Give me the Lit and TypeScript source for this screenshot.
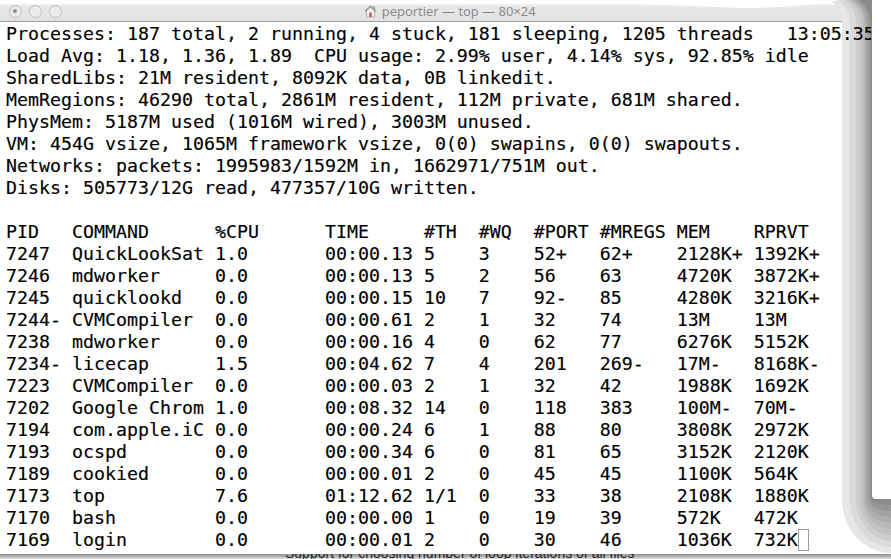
import { LitElement, html, css, svg } from "lit";
import { customElement } from "lit/decorators.js";

const SUMMARY = [
  "Processes: 187 total, 2 running, 4 stuck, 181 sleeping, 1205 threads   13:05:35",
  "Load Avg: 1.18, 1.36, 1.89  CPU usage: 2.99% user, 4.14% sys, 92.85% idle",
  "SharedLibs: 21M resident, 8092K data, 0B linkedit.",
  "MemRegions: 46290 total, 2861M resident, 112M private, 681M shared.",
  "PhysMem: 5187M used (1016M wired), 3003M unused.",
  "VM: 454G vsize, 1065M framework vsize, 0(0) swapins, 0(0) swapouts.",
  "Networks: packets: 1995983/1592M in, 1662971/751M out.",
  "Disks: 505773/12G read, 477357/10G written.",
  " ",
];

const WIDTHS = [6, 13, 10, 9, 5, 5, 6, 7, 7, 0];
const TABLE = [
  ["PID", "COMMAND", "%CPU", "TIME", "#TH", "#WQ", "#PORT", "#MREGS", "MEM", "RPRVT"],
  ["7247", "QuickLookSat", "1.0", "00:00.13", "5", "3", "52+", "62+", "2128K+", "1392K+"],
  ["7246", "mdworker", "0.0", "00:00.13", "5", "2", "56", "63", "4720K", "3872K+"],
  ["7245", "quicklookd", "0.0", "00:00.15", "10", "7", "92-", "85", "4280K", "3216K+"],
  ["7244-", "CVMCompiler", "0.0", "00:00.61", "2", "1", "32", "74", "13M", "13M"],
  ["7238", "mdworker", "0.0", "00:00.16", "4", "0", "62", "77", "6276K", "5152K"],
  ["7234-", "licecap", "1.5", "00:04.62", "7", "4", "201", "269-", "17M-", "8168K-"],
  ["7223", "CVMCompiler", "0.0", "00:00.03", "2", "1", "32", "42", "1988K", "1692K"],
  ["7202", "Google Chrom", "1.0", "00:08.32", "14", "0", "118", "383", "100M-", "70M-"],
  ["7194", "com.apple.iC", "0.0", "00:00.24", "6", "1", "88", "80", "3808K", "2972K"],
  ["7193", "ocspd", "0.0", "00:00.34", "6", "0", "81", "65", "3152K", "2120K"],
  ["7189", "cookied", "0.0", "00:00.01", "2", "0", "45", "45", "1100K", "564K"],
  ["7173", "top", "7.6", "01:12.62", "1/1", "0", "33", "38", "2108K", "1880K"],
  ["7170", "bash", "0.0", "00:00.00", "1", "0", "19", "39", "572K", "472K"],
  ["7169", "login", "0.0", "00:00.01", "2", "0", "30", "46", "1036K", "732K"],
];
const rowText = (r: string[]) => r.map((c, i) => c.padEnd(WIDTHS[i])).join("");

/* Shadow bands of the neighbouring window: [left x, colour, bottom radius] */
const BANDS: [number, string, number][] = [
  [842, "#e6e6e6", 54],
  [850, "#dadada", 48],
  [856, "#cecece", 42],
  [860, "#c3c3c3", 36],
  [863, "#b8b8b8", 30],
  [865, "#adadad", 24],
  [867, "#a2a2a2", 18],
  [869, "#979797", 12],
  [871, "#8a8a8a", 6],
];
const bandPath = (x: number, bottom: number) => {
  const rx = 891 - x;
  return `M${x - 12} 0 Q${x} 8 ${x} 22 L${x} 499 A${rx} ${bottom} 0 0 0 891 ${499 + bottom} L891 0 Z`;
};

@customElement("app-root")
export class AppRoot extends LitElement {
  static styles = css`
    :host {
      display: block;
      position: relative;
      width: 891px;
      height: 559px;
      overflow: hidden;
      background: #fff;
    }
    .titlebar {
      height: 22px;
      box-sizing: border-box;
      display: flex;
      align-items: center;
      padding: 1px 0 0 8.5px;
      background: linear-gradient(#fff 0, #fff 3px, #e8e8e8 6px, #e2e2e2 20px);
      border-bottom: 1px solid #a0a0a0;
    }
    .lights {
      display: flex;
      gap: 7px;
      width: 0;
    }
    .light {
      flex: none;
      width: 13px;
      height: 13px;
      box-sizing: border-box;
      border: 1.5px solid #bcbcbc;
      border-radius: 50%;
      background: #ececec;
      display: flex;
      align-items: center;
      justify-content: center;
    }
    .dot {
      width: 4px;
      height: 4px;
      border-radius: 50%;
      background: #8c8c8c;
    }
    .title {
      flex: 1;
      display: flex;
      justify-content: center;
      align-items: center;
      gap: 5px;
      font: 13px/16px "Open Sans", "Noto Sans", sans-serif;
      color: #868686;
    }
    .terminal {
      height: 532px;
      background: #fff;
      border-bottom-left-radius: 5px;
      border-bottom-right-radius: 5px;
    }
    .text {
      position: relative;
      z-index: 1;
      width: 871px;
      height: 529px;
      box-sizing: border-box;
      padding: 1px 0 0 6px;
      overflow: hidden;
      font: 18.27px/22px "DejaVu Sans Mono", monospace;
      color: #000;
      -webkit-text-stroke: 0.15px #000;
    }
    .line {
      height: 22px;
      white-space: pre;
    }
    .cursor {
      display: inline-block;
      width: 11px;
      height: 22px;
      box-sizing: border-box;
      border: 1px solid #9a9a9a;
      vertical-align: top;
    }
    .bands {
      position: absolute;
      left: 0;
      top: 0;
    }
    .under {
      height: 5px;
      overflow: hidden;
      background: linear-gradient(#8f8f8f, #a8a8a8 2px, #e2e2e2 5px);
      padding-left: 285px;
      font: 14px/14px "Liberation Sans", Arial, sans-serif;
      color: #222;
    }
    .under span {
      display: block;
      margin-top: -8px;
      white-space: pre;
    }
  `;

  render() {
    return html`
      <div class="titlebar">
        <div class="lights">
          <div class="light"><div class="dot"></div></div>
          <div class="light"></div>
          <div class="light"></div>
        </div>
        <div class="title">
          <svg width="13" height="14" viewBox="0 0 13 14">
            <path d="M1 7.5 6.5 2 12 7.5" fill="none" stroke="#8a8a8a" stroke-width="1.2" />
            <path d="M9 2.5h1.4v2.6" fill="none" stroke="#999" />
            <path d="M2.5 7 6.5 3.2 10.5 7v6h-8z" fill="#f4f1ec" stroke="#a8a8a8" stroke-width=".8" />
            <rect x="5.2" y="8.6" width="2.6" height="4.4" fill="#b5654a" />
          </svg>
          <span>peportier — top — 80×24</span>
        </div>
      </div>
      <div class="terminal">
        <div class="text">
          ${SUMMARY.map((l) => html`<div class="line">${l}</div>`)}
          ${TABLE.map(
            (r, i) =>
              html`<div class="line">${rowText(r)}${i === TABLE.length - 1
                ? html`<span class="cursor"></span>`
                : ""}</div>`
          )}
        </div>
      </div>
      <div class="under"><span>Support for choosing number of loop iterations of all files</span></div>
      <svg class="bands" width="891" height="554" viewBox="0 0 891 554">
        ${BANDS.map(([x, c, b]) => svg`<path d=${bandPath(x, b)} fill=${c} />`)}
        <path d="M640 0V4L741 8Q800 8 838 0Z" fill="#fff" />
        <path d="M872 0H891V499H876Q872 499 872 495Z" fill="#fff" />
      </svg>
    `;
  }
}
